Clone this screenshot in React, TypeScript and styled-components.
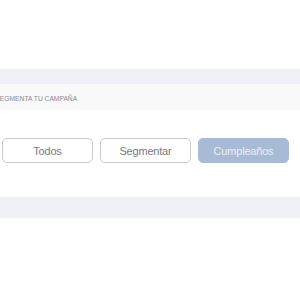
import styled, { createGlobalStyle } from 'styled-components';

const GlobalStyle = createGlobalStyle`
  html, body {
    margin: 0;
    padding: 0;
    background: #ffffff;
    overflow: hidden;
  }
  body {
    font-family: 'Liberation Sans', Arial, sans-serif;
  }
`;

const Page = styled.div`
  width: 300px;
  height: 300px;
  display: flex;
  flex-direction: column;
  padding-top: 69px;
  box-sizing: border-box;
`;

const Band = styled.div<{ $height: number }>`
  height: ${(p) => p.$height}px;
  background: #f0f1f6;
`;

const SectionHeader = styled.div`
  height: 26px;
  background: #f9f9f9;
  display: flex;
  align-items: center;
  padding-top: 2px;
  box-sizing: border-box;
`;

const SectionTitle = styled.span`
  margin-left: -4.6px;
  font-size: 6.7px;
  color: #8a8a8a;
  text-transform: uppercase;
  white-space: nowrap;
`;

const ButtonRow = styled.div`
  display: flex;
  gap: 7px;
  padding: 28px 0 34px 2px;
`;

const OptionButton = styled.button<{ $active?: boolean }>`
  width: 91px;
  height: 25px;
  box-sizing: border-box;
  border-radius: 5px;
  border: 1px solid ${(p) => (p.$active ? '#a8bbd5' : '#cacaca')};
  background: ${(p) => (p.$active ? '#a8bbd5' : '#ffffff')};
  color: ${(p) => (p.$active ? '#e8eef6' : '#7a7a7a')};
  font-family: 'Liberation Sans', Arial, sans-serif;
  font-size: 11px;
  letter-spacing: -0.2px;
  padding: 0;
  cursor: pointer;
`;

const options = ['Todos', 'Segmentar', 'Cumpleaños'];

export default function App() {
  return (
    <>
      <GlobalStyle />
      <Page>
        <Band $height={15} />
        <SectionHeader>
          <SectionTitle>Segmenta tu campaña</SectionTitle>
        </SectionHeader>
        <ButtonRow>
          {options.map((o, i) => (
            <OptionButton key={o} $active={i === 2}>
              {o}
            </OptionButton>
          ))}
        </ButtonRow>
        <Band $height={21} />
      </Page>
    </>
  );
}
